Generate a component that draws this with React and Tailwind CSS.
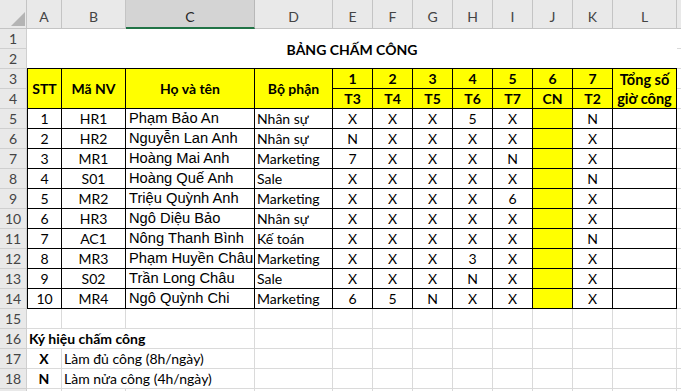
import React from "react";

const rows = [
  [1, "HR1", "Phạm Bảo An", "Nhân sự", "X", "X", "X", "5", "X", "N"],
  [2, "HR2", "Nguyễn Lan Anh", "Nhân sự", "N", "X", "X", "X", "X", "X"],
  [3, "MR1", "Hoàng Mai Anh", "Marketing", "7", "X", "X", "X", "N", "X"],
  [4, "S01", "Hoàng Quế Anh", "Sale", "X", "X", "X", "X", "X", "N"],
  [5, "MR2", "Triệu Quỳnh Anh", "Marketing", "X", "X", "X", "X", "6", "X"],
  [6, "HR3", "Ngô Diệu Bảo", "Nhân sự", "X", "X", "X", "X", "X", "X"],
  [7, "AC1", "Nông Thanh Bình", "Kế toán", "X", "X", "X", "X", "X", "N"],
  [8, "MR3", "Phạm Huyền Châu", "Marketing", "X", "X", "X", "3", "X", "X"],
  [9, "S02", "Trần Long Châu", "Sale", "X", "X", "X", "N", "X", "X"],
  [10, "MR4", "Ngô Quỳnh Chi", "Marketing", "6", "5", "N", "X", "X", "X"],
];

const G = "border-r border-b border-[#dadada]";
const B = "border-r border-b border-black";

function RowHead({ n }) {
  return (
    <div className="flex items-center justify-center bg-[#e9e9e9] border-r border-b border-[#cfcfcf] text-[#444] text-[14px] leading-none">
      {n}
    </div>
  );
}

function Blank({ n = 1, last = true }) {
  const arr = [];
  for (let i = 0; i < n; i++) arr.push(<div key={i} className={G}></div>);
  if (last) arr.push(<div key="m" className="border-b border-[#dadada]"></div>);
  return <>{arr}</>;
}

export default function App() {
  const letters = ["A", "B", "C", "D", "E", "F", "G", "H", "I", "J", "K", "L"];
  return (
    <div className="w-[681px] h-[391px] overflow-hidden bg-white font-['Lato',sans-serif] text-[14px] text-black">
      <div className="grid grid-cols-[27px_35px_64px_129px_78px_40px_40px_40px_40px_40px_40px_40px_64px_4px] grid-rows-[29px_repeat(19,20px)]">
        {/* column header */}
        <div className="relative bg-[#e9e9e9] border-r border-b border-[#c4c4c4]">
          <svg className="absolute left-[11px] top-[12px]" width="14" height="14" viewBox="0 0 14 14">
            <polygon points="14,0 14,14 0,14" fill="#b4b4b4" />
          </svg>
        </div>
        {letters.map((l) =>
          l === "C" ? (
            <div
              key={l}
              className="flex items-end justify-center pb-[3px] bg-[#d4d4d4] border-r border-[#b8b8b8] border-b-2 border-b-[#217346] text-[#262626] text-[14px] leading-none"
            >
              {l}
            </div>
          ) : (
            <div
              key={l}
              className="flex items-end justify-center pb-[4px] bg-[#e9e9e9] border-r border-b border-[#c4c4c4] text-[#444] text-[14px] leading-none"
            >
              {l}
            </div>
          )
        )}
        <div className="bg-[#e9e9e9] border-b border-[#c4c4c4]"></div>

        {/* rows 1-2: title */}
        <RowHead n={1} />
        <div className="col-span-12 row-span-2 flex items-center justify-center font-bold border-b border-black text-[14px] pt-[2px]">
          BẢNG CHẤM CÔNG
        </div>
        <div className="border-b border-[#dadada]"></div>
        <RowHead n={2} />
        <div className="border-b border-[#dadada]"></div>

        {/* rows 3-4: header */}
        <RowHead n={3} />
        <div className={`row-span-2 flex items-center justify-center bg-[#ffff00] font-bold border-l ${B}`}>STT</div>
        <div className={`row-span-2 flex items-center justify-center bg-[#ffff00] font-bold ${B}`}>Mã NV</div>
        <div className={`row-span-2 flex items-center justify-center bg-[#ffff00] font-bold ${B}`}>Họ và tên</div>
        <div className={`row-span-2 flex items-center justify-center bg-[#ffff00] font-bold ${B}`}>Bộ phận</div>
        {["1", "2", "3", "4", "5", "6", "7"].map((d) => (
          <div key={d} className={`flex items-center justify-center bg-[#ffff00] font-bold leading-none ${B}`}>
            {d}
          </div>
        ))}
        <div className={`row-span-2 flex flex-col items-center justify-center bg-[#ffff00] font-bold text-[14.5px] leading-[19px] ${B}`}>
          <span>Tổng số</span>
          <span>giờ công</span>
        </div>
        <div className="border-b border-[#dadada]"></div>
        <RowHead n={4} />
        {["T3", "T4", "T5", "T6", "T7", "CN", "T2"].map((d) => (
          <div key={d} className={`flex items-center justify-center bg-[#ffff00] font-bold leading-none ${B}`}>
            {d}
          </div>
        ))}
        <div className="border-b border-[#dadada]"></div>

        {/* data rows */}
        {rows.map((r, i) => (
          <React.Fragment key={i}>
            <RowHead n={i + 5} />
            <div className={`flex items-center justify-center leading-none border-l ${B}`}>{r[0]}</div>
            <div className={`flex items-center justify-center leading-none ${B}`}>{r[1]}</div>
            <div className={`flex items-center pl-[3px] leading-none whitespace-nowrap font-['Liberation_Sans',Arial,sans-serif] text-[14.7px] ${B}`}>
              {r[2]}
            </div>
            <div className={`flex items-center pl-[2px] leading-none whitespace-nowrap ${B}`}>{r[3]}</div>
            {[4, 5, 6, 7, 8].map((k) => (
              <div key={k} className={`flex items-center justify-center leading-none ${B}`}>
                {r[k]}
              </div>
            ))}
            <div className={`bg-[#ffff00] ${B}`}></div>
            <div className={`flex items-center justify-center leading-none ${B}`}>{r[9]}</div>
            <div className={B}></div>
            <div className="border-b border-[#dadada]"></div>
          </React.Fragment>
        ))}

        {/* row 15 */}
        <RowHead n={15} />
        <Blank n={12} />

        {/* row 16 */}
        <RowHead n={16} />
        <div className="flex items-center pl-[2px] font-bold whitespace-nowrap leading-none border-b border-[#dadada] relative z-10">
          Ký hiệu chấm công
        </div>
        <div className="border-b border-[#dadada]"></div>
        <Blank n={10} />

        {/* row 17 */}
        <RowHead n={17} />
        <div className={`flex items-center justify-center font-bold leading-none ${G}`}>X</div>
        <div className="flex items-center pl-[2px] whitespace-nowrap leading-none border-b border-[#dadada] relative z-10">
          Làm đủ công (8h/ngày)
        </div>
        <Blank n={10} />

        {/* row 18 */}
        <RowHead n={18} />
        <div className={`flex items-center justify-center font-bold leading-none ${G}`}>N</div>
        <div className="flex items-center pl-[2px] whitespace-nowrap leading-none border-b border-[#dadada] relative z-10">
          Làm nửa công (4h/ngày)
        </div>
        <Blank n={10} />

        {/* row 19 (only top edge visible) */}
        <div className="bg-[#e9e9e9] border-r border-[#cfcfcf]"></div>
        <Blank n={12} />
      </div>
    </div>
  );
}
